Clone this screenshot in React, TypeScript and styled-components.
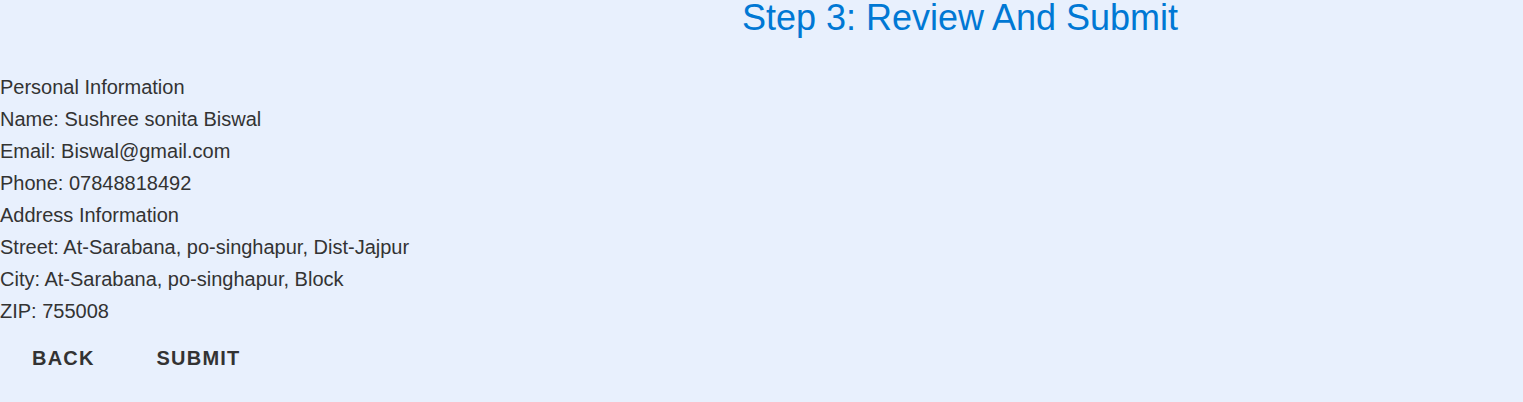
import React from "react";
import styled, { createGlobalStyle } from "styled-components";

const Global = createGlobalStyle`
  html, body { margin: 0; padding: 0; background: #e8f0fd; }
  body { font-family: "Liberation Sans", Arial, sans-serif; color: #333333; }
`;

const Page = styled.div`
  width: 1523px;
  min-height: 402px;
  background: #e8f0fd;
  display: flex;
  flex-direction: column;
`;

const Title = styled.h2`
  margin: 0;
  padding-left: 397px;
  text-align: center;
  font-size: 36px;
  font-weight: 400;
  line-height: 36px;
  color: #0078d4;
`;

const Details = styled.div`
  margin-top: 35px;
  display: flex;
  flex-direction: column;
`;

const Line = styled.div`
  font-size: 20px;
  line-height: 32px;
`;

const Actions = styled.div`
  display: flex;
  gap: 14px;
  margin-top: 11px;
`;

const Button = styled.button`
  background: transparent;
  border: none;
  padding: 8px 16px;
  min-width: 64px;
  margin-left: 16px;
  font-family: "Liberation Sans", Arial, sans-serif;
  font-weight: 700;
  font-size: 20px;
  line-height: 24px;
  letter-spacing: 1.2px;
  text-transform: uppercase;
  color: #333333;
  cursor: pointer;
`;

const lines = [
  "Personal Information",
  "Name: Sushree sonita Biswal",
  "Email: Biswal@gmail.com",
  "Phone: 07848818492",
  "Address Information",
  "Street: At-Sarabana, po-singhapur, Dist-Jajpur",
  "City: At-Sarabana, po-singhapur, Block",
  "ZIP: 755008",
];

export default function App() {
  return (
    <Page>
      <Global />
      <Title>Step 3: Review And Submit</Title>
      <Details>
        {lines.map((l) => (
          <Line key={l}>{l}</Line>
        ))}
      </Details>
      <Actions>
        <Button>Back</Button>
        <Button>Submit</Button>
      </Actions>
    </Page>
  );
}
